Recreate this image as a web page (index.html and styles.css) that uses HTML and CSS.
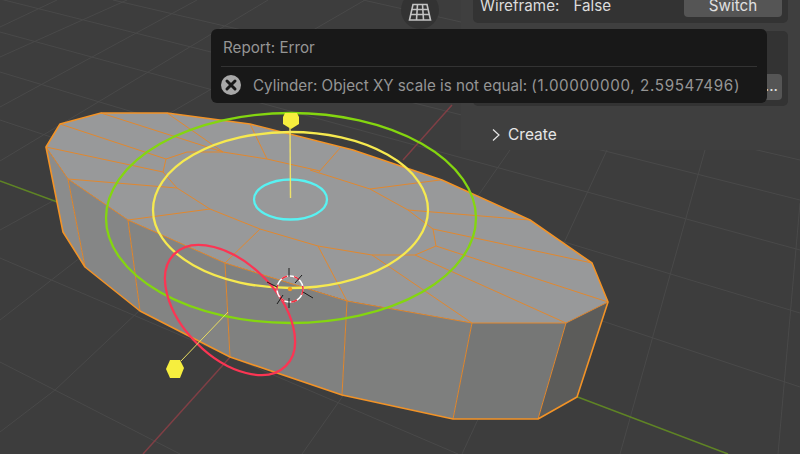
FILE: index.html
```html
<!DOCTYPE html>
<html lang="en">
<head>
    <meta charset="UTF-8">
    <title>Viewport</title>
    <link rel="stylesheet" href="styles.css">
</head>
<body>
<div class="viewport">
    <svg class="scene" width="800" height="454" viewBox="0 0 800 454">
        <!-- floor grid -->
        <path class="grid" d="M0 -1L800 200M113 0L800 160M0 32L800 250M0 72L800 313M0 120L800 387M363 0L470 24M0 258L458 454M0 362L180 454
            M0 27L57 0M0 57L127 0M0 107L197 0M0 161L268 0M0 230L60 197M170 113L365 0M0 320L90 250M0 432L55 390L140 310
            M302 454L345 393M462 454L480 415M510 150L475 200M607 150L563 245M705 150L620 454M800 203L778 454"/>
        <path class="axis-x" d="M452 105L403 160M232 355L143 454"/>
        <path class="axis-y" d="M0 181L60 203M575 396L728 454"/>

        <!-- cylinder sides -->
        <polygon class="side-1" points="46,147 68,179 85,267 63,232"/>
        <polygon class="side-2" points="68,179 128,220 140,311 85,267"/>
        <polygon class="side-3" points="128,220 225,263 230,357 140,311"/>
        <polygon class="side-4" points="225,263 347,301 342,395 230,357"/>
        <polygon class="side-5" points="347,301 472,323 453,419 342,395"/>
        <polygon class="side-6" points="472,323 566,323 538,419 453,419"/>
        <polygon class="side-7" points="566,323 608,302 577,397 538,419"/>
        <!-- cylinder cap -->
        <polygon class="cap" points="46,147 60,124 101,113 167,113 250,124 353,150 442,180 530,220 592,263 608,302 566,323 472,323 348,301 225,263 128,220 68,179"/>

        <path class="edge" d="M46 147L68 179L128 220L225 263L347 301L472 323L566 323L608 302
            M68 179L85 267M128 220L140 311M225 263L230 357M347 301L342 395M472 323L453 419M566 323L538 419
            M60 124L166 159M101 113L223 152M167 113L223 152M166 159L187 152L223 152L267 159L320 171M250 124L267 159
            M46 147L163 172M166 159L163 172L177 188L210 209L260 229L318 246M68 179L177 188M128 220L210 209M260 229L225 263
            M318 246L347 301M310 170L370 189L408 210L433 229L436 246L415 255L372 255L318 246M319 172L340 148M370 189L440 180
            M408 210L530 220M433 229L592 263M436 246L608 302M415 255L566 323M372 255L472 323"/>
        <polygon class="outline" points="46,147 60,124 101,113 167,113 250,124 353,150 442,180 530,220 592,263 608,302 577,397 538,419 453,419 342,395 230,357 140,311 85,267 63,232"/>

        <!-- gizmo -->
        <ellipse class="ring-green" cx="291" cy="218" rx="185" ry="105"/>
        <ellipse class="ring-yellow" cx="290.5" cy="210" rx="137.5" ry="78"/>
        <ellipse class="ring-cyan" cx="290.5" cy="199.5" rx="36.5" ry="20"/>
        <ellipse class="ring-red" cx="230" cy="310" rx="79" ry="47" transform="rotate(45 230 310)"/>
        <path class="handle-top" d="M290 128L290.5 198"/>
        <path class="handle-side" d="M181 361L228 312"/>
        <polygon class="knob" points="285,113 297,113 299,117 299,124 291,129 283,124 283,117"/>
        <polygon class="knob" points="170,360 180,360 184,368 180,378 170,378 166,369"/>

        <!-- 3d cursor -->
        <circle class="cursor-white" cx="290" cy="289" r="13"/>
        <circle class="cursor-red" cx="290" cy="289" r="13"/>
        <path class="cursor-ticks" d="M289 268L289 277M289 298L289 308M302 275L295 283M283 295L277 304M267 282L277 287M303 292L313 298"/>
        <circle class="origin" cx="290" cy="289" r="2.2"/>
    </svg>

    <div class="nav-btn">
        <svg width="24" height="18" viewBox="0 0 24 18">
            <path class="nav-icon" d="M5 1.5L19 1.5L22.5 17L1.5 17ZM4 6.5L20 6.5M3 11.5L21 11.5M9.5 1.5L8.5 17M14.5 1.5L15.5 17"/>
        </svg>
    </div>

    <div class="side">
        <div class="box box-top">
            <span class="label">Wireframe:</span>
            <span class="label value">False</span>
            <span class="btn btn-switch">Switch</span>
        </div>
        <div class="box box-file">
            <span class="btn btn-dots">...</span>
        </div>
        <div class="create">
            <svg width="10" height="14" viewBox="0 0 10 14">
                <path class="chevron" d="M2 1.5L8 7L2 12.5"/>
            </svg>
            <span>Create</span>
        </div>
    </div>

    <div class="report">
        <div class="report-title">Report: Error</div>
        <div class="report-msg">
            <svg width="20" height="20" viewBox="0 0 20 20">
                <circle class="err-bg" cx="10" cy="10" r="10"/>
                <path class="err-x" d="M6 6L14 14M14 6L6 14"/>
            </svg>
            <span>Cylinder: Object XY scale is not equal: <span class="nums">(1.00000000, 2.59547496)</span></span>
        </div>
    </div>
</div>
</body>
</html>
```

FILE: styles.css
```css
/* page */
body {
    margin: 0;
    background-color: #3d3d3d;
    font-family: Inter, "Noto Sans", sans-serif;
    font-size: 15.2px;
    overflow: hidden;
}

.viewport {
    position: relative;
    width: 800px;
    height: 454px;
    overflow: hidden;
}

.scene {
    position: absolute;
    left: 0;
    top: 0;
}

/* floor */
.grid {
    fill: none;
    stroke: #494949;
    stroke-width: 1;
}

.axis-x {
    fill: none;
    stroke: #7f3f45;
    stroke-width: 1.5;
}

.axis-y {
    fill: none;
    stroke: #5f8425;
    stroke-width: 1.5;
}

/* cylinder */
.cap { fill: #98999a; }
.side-1 { fill: #8b8c8c; }
.side-2 { fill: #858686; }
.side-3 { fill: #838483; }
.side-4 { fill: #808180; }
.side-5 { fill: #7e7f7e; }
.side-6 { fill: #767776; }
.side-7 { fill: #5c5c5a; }

.edge {
    fill: none;
    stroke: #e1882f;
    stroke-width: 1;
}

.outline {
    fill: none;
    stroke: #f29327;
    stroke-width: 1.6;
    stroke-linejoin: round;
}

/* gizmo */
.ring-green,
.ring-yellow,
.ring-cyan,
.ring-red {
    fill: none;
    stroke-width: 2.3;
}

.ring-green { stroke: #84d60f; }
.ring-yellow { stroke: #f6e94f; }
.ring-cyan { stroke: #58f2f2; }
.ring-red { stroke: #fb3553; }

.handle-top {
    stroke: #eee26a;
    stroke-width: 1.4;
}

.handle-side {
    stroke: #e9dd60;
    stroke-width: 1;
}

.knob { fill: #f6ee3e; }

.cursor-white {
    fill: none;
    stroke: #ffffff;
    stroke-width: 1.5;
}

.cursor-red {
    fill: none;
    stroke: #f03040;
    stroke-width: 1.5;
    stroke-dasharray: 6 7;
}

.cursor-ticks {
    stroke: #1c1c1c;
    stroke-width: 1;
}

.origin { fill: #f59a1e; }

/* nav button */
.nav-btn {
    position: absolute;
    left: 401px;
    top: -9px;
    width: 38px;
    height: 38px;
    display: flex;
    align-items: flex-end;
    justify-content: center;
    box-sizing: border-box;
    border-radius: 50%;
    background-color: #333333;
}

.nav-btn svg {
    margin-bottom: 8px;
}

.nav-icon {
    fill: none;
    stroke: #c4c4c4;
    stroke-width: 1.6;
}

/* side panel */
.side {
    position: absolute;
    left: 461px;
    top: 0;
    width: 339px;
    height: 150px;
    padding: 0 12px;
    box-sizing: border-box;
    background-color: #3f3f3f;
    color: #dcdcdc;
    display: flex;
    flex-direction: column;
}

.box {
    background-color: #333333;
    border-radius: 5px;
    display: flex;
    box-sizing: border-box;
    padding-right: 6px;
}

.box-top {
    height: 23px;
    align-items: flex-end;
    padding-left: 7px;
    padding-bottom: 6px;
    border-radius: 0 0 5px 5px;
}

.box-file {
    height: 75px;
    margin-top: 8px;
    align-items: flex-end;
    justify-content: flex-end;
    padding-bottom: 6px;
}

.label {
    line-height: 17px;
    margin-bottom: 3px;
}

.value {
    margin-left: 14px;
}

.btn {
    background-color: #555555;
    border-radius: 4px;
    color: #e0e0e0;
    text-align: center;
}

.btn-switch {
    width: 98px;
    height: 30px;
    line-height: 17px;
    margin-left: auto;
    display: flex;
    align-items: flex-end;
    justify-content: center;
    padding-bottom: 3px;
    box-sizing: border-box;
}

.btn-dots {
    width: 40px;
    height: 26px;
    line-height: 24px;
    text-align: right;
    padding-right: 4px;
    box-sizing: border-box;
}

.create {
    display: flex;
    align-items: center;
    gap: 7px;
    margin-top: 20px;
    padding-left: 18px;
    color: #e6e6e6;
    font-size: 15.5px;
    line-height: 18px;
}

.chevron {
    fill: none;
    stroke: #e6e6e6;
    stroke-width: 1.2;
}

/* report popup */
.report {
    position: absolute;
    left: 211px;
    top: 29px;
    width: 556px;
    height: 74px;
    padding: 0 10px;
    box-sizing: border-box;
    background-color: #181818;
    border-radius: 6px;
    color: #959595;
}

.report-title {
    height: 38px;
    line-height: 38px;
    padding-left: 2px;
    border-bottom: 1px solid #333333;
    box-sizing: border-box;
}

.report-msg {
    height: 36px;
    display: flex;
    align-items: center;
    gap: 12px;
}

.nums {
    letter-spacing: 0.63px;
}

.err-bg { fill: #a8a8a8; }

.err-x {
    stroke: #181818;
    stroke-width: 3;
    stroke-linecap: round;
}
```
